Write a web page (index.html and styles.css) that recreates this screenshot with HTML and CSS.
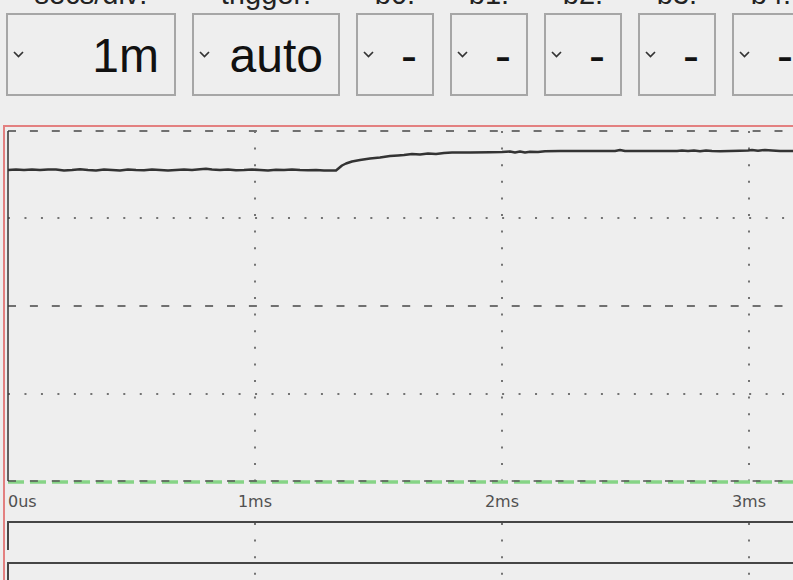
FILE: index.html
```html
<!DOCTYPE html>
<html lang="en">
<head>
  <meta charset="UTF-8" />
  <meta name="viewport" content="width=device-width, initial-scale=1.0" />
  <title>Scope</title>
  <link rel="stylesheet" href="styles.css">
</head>
<body>
  <!-- Capture settings -->
  <div class="controls">
    <div class="ctl">
      <div class="ctl-label">secs/div:</div>
      <div class="ctl-box ctl-wide">
        <svg class="chev" width="11" height="7" viewBox="0 0 11 7"><polyline points="1,1 5.5,5.5 10,1" /></svg>
        <span class="ctl-value">1m</span>
      </div>
    </div>
    <div class="ctl">
      <div class="ctl-label">trigger:</div>
      <div class="ctl-box ctl-mid">
        <svg class="chev" width="11" height="7" viewBox="0 0 11 7"><polyline points="1,1 5.5,5.5 10,1" /></svg>
        <span class="ctl-value">auto</span>
      </div>
    </div>
    <div class="ctl">
      <div class="ctl-label">b0:</div>
      <div class="ctl-box">
        <svg class="chev" width="11" height="7" viewBox="0 0 11 7"><polyline points="1,1 5.5,5.5 10,1" /></svg>
        <span class="ctl-value">-</span>
      </div>
    </div>
    <div class="ctl">
      <div class="ctl-label">b1:</div>
      <div class="ctl-box">
        <svg class="chev" width="11" height="7" viewBox="0 0 11 7"><polyline points="1,1 5.5,5.5 10,1" /></svg>
        <span class="ctl-value">-</span>
      </div>
    </div>
    <div class="ctl">
      <div class="ctl-label">b2:</div>
      <div class="ctl-box">
        <svg class="chev" width="11" height="7" viewBox="0 0 11 7"><polyline points="1,1 5.5,5.5 10,1" /></svg>
        <span class="ctl-value">-</span>
      </div>
    </div>
    <div class="ctl">
      <div class="ctl-label">b3:</div>
      <div class="ctl-box">
        <svg class="chev" width="11" height="7" viewBox="0 0 11 7"><polyline points="1,1 5.5,5.5 10,1" /></svg>
        <span class="ctl-value">-</span>
      </div>
    </div>
    <div class="ctl">
      <div class="ctl-label">b4:</div>
      <div class="ctl-box">
        <svg class="chev" width="11" height="7" viewBox="0 0 11 7"><polyline points="1,1 5.5,5.5 10,1" /></svg>
        <span class="ctl-value">-</span>
      </div>
    </div>
  </div>

  <!-- Trace display: analog channel on top, digital channels below -->
  <div class="scope">
    <svg class="scope-svg" width="788" height="453" viewBox="5 127 788 453">
      <!-- horizontal grid -->
      <line class="grid-dash" x1="8" y1="131" x2="793" y2="131" />
      <line class="grid-dot" x1="8" y1="218" x2="793" y2="218" />
      <line class="grid-dash" x1="8" y1="306" x2="793" y2="306" />
      <line class="grid-dot" x1="8" y1="394" x2="793" y2="394" />

      <!-- vertical grid, one per ms -->
      <line class="grid-vdot" x1="255" y1="131" x2="255" y2="481" />
      <line class="grid-vdot" x1="502" y1="131" x2="502" y2="481" />
      <line class="grid-vdot" x1="749" y1="131" x2="749" y2="481" />

      <!-- trigger level + bottom grid -->
      <line class="trig" x1="8" y1="482" x2="793" y2="482" />
      <line class="grid-dash grid-floor" x1="8" y1="481" x2="793" y2="481" />

      <!-- left axis -->
      <line class="axis" x1="8" y1="131" x2="8" y2="481" />

      <!-- analog trace -->
      <polyline class="trace" points="8,170 16,169.5 24,170 32,169.5 40,170 48,169.5 56,169.5 64,170.5 72,170 80,169.3 88,170 96,170.5 104,169.5 112,170 120,170.5 128,169.5 136,170 144,170.2 152,169.5 160,170 168,170.5 176,170 184,169.5 192,170 200,169.2 206,168.8 212,169.5 220,170 228,169.5 236,170.3 244,170 252,169.5 260,170 268,170.5 276,169.8 284,170 292,169.5 300,170 308,170.3 316,170 324,170.5 330,170.5 336,170.5 339,168 342,165.5 346,163.5 352,161.5 360,160 370,158.5 380,157.5 390,156 398,155.5 404,155 412,154 420,154.5 428,153.5 436,154 444,153 452,152.5 470,152.5 490,152.3 502,152 510,151.5 515,152.5 520,151.5 525,152.5 530,151.8 538,152 545,151.3 560,151 600,151 615,151 620,150 625,151 660,151 677,151 682,150.5 688,151 694,150.5 700,151.2 706,150.4 712,151 720,151.2 730,151 740,150.8 748,150.5 752,150 758,150.8 765,150 772,150.5 780,151 793,151" />

      <!-- time axis -->
      <text class="tick" x="8" y="507">0us</text>
      <text class="tick tick-mid" x="255" y="507">1ms</text>
      <text class="tick tick-mid" x="502" y="507">2ms</text>
      <text class="tick tick-mid" x="749" y="507">3ms</text>

      <!-- digital channels -->
      <line class="grid-vdot" x1="255" y1="523" x2="255" y2="580" />
      <line class="grid-vdot" x1="502" y1="523" x2="502" y2="580" />
      <line class="grid-vdot" x1="749" y1="523" x2="749" y2="580" />
      <polyline class="bit" points="8,550 8,522 793,522" />
      <polyline class="bit" points="8,591 8,563 793,563" />
    </svg>
  </div>
</body>
</html>
```

FILE: styles.css
```css
/* Basic page */
html, body {
  overflow: hidden;
}
body {
  margin: 0;
  background: #eeeeee;
  font-family: "Liberation Sans", Arial, sans-serif;
  color: #111;
}

/* Settings row */
.controls {
  display: flex;
  gap: 16px;
  margin-left: 6px;
}
.ctl {
  display: flex;
  flex-direction: column;
  flex-shrink: 0;
}
.ctl-label {
  margin-top: -22px;
  margin-bottom: 3px;
  font-size: 29px;
  line-height: 32px;
  text-align: center;
  color: #222;
}
.ctl-box {
  box-sizing: border-box;
  display: flex;
  align-items: center;
  width: 78px;
  height: 83px;
  padding: 3px 15px 0 5px;
  border: 2px solid #a6a6a6;
}
.ctl-wide {
  width: 170px;
}
.ctl-mid {
  width: 148px;
}
.chev {
  flex-shrink: 0;
  margin-top: -3px;
}
.chev polyline {
  fill: none;
  stroke: #333;
  stroke-width: 1.7;
}
.ctl-value {
  margin-left: auto;
  font-size: 48px;
  line-height: 48px;
  white-space: nowrap;
}

/* Trace display */
.scope {
  margin: 29px 0 0 3px;
  border-top: 2px solid #e38080;
  border-left: 2px solid #e38080;
}
.scope-svg {
  display: block;
}
.grid-dash {
  stroke: #707070;
  stroke-width: 2;
  stroke-dasharray: 8 13.9;
}
.grid-floor {
  stroke: #555;
  stroke-width: 1.5;
}
.grid-dot {
  stroke: #737373;
  stroke-width: 2;
  stroke-dasharray: 2 14.47;
}
.grid-vdot {
  stroke: #737373;
  stroke-width: 2;
  stroke-dasharray: 2 14.6;
}
.trig {
  stroke: #86d486;
  stroke-width: 3.5;
  stroke-dasharray: 16 6;
}
.axis {
  stroke: #333;
  stroke-width: 1.5;
}
.trace {
  fill: none;
  stroke: #333;
  stroke-width: 2.5;
  stroke-linejoin: round;
}
.bit {
  fill: none;
  stroke: #454545;
  stroke-width: 2;
}
.tick {
  font-family: "DejaVu Sans", sans-serif;
  font-size: 16px;
  fill: #505050;
}
.tick-mid {
  text-anchor: middle;
}
```
